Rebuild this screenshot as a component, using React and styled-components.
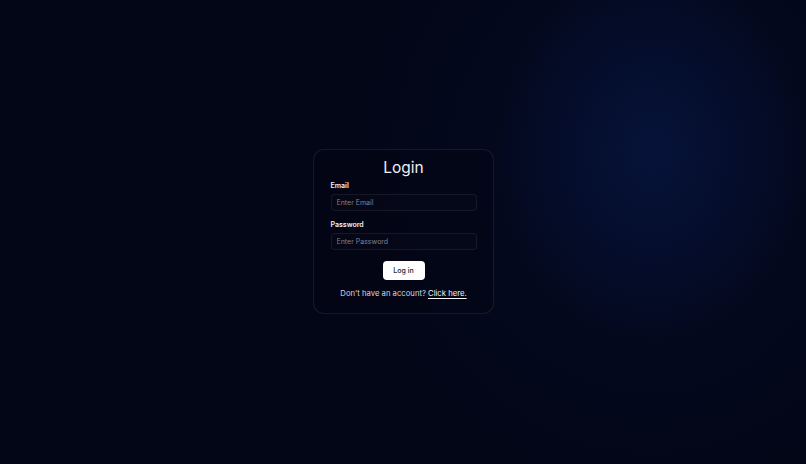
import React from 'react'
import styled, { createGlobalStyle } from 'styled-components'

const GlobalStyle = createGlobalStyle`
    html, body, #root {
        margin: 0;
        padding: 0;
        height: 100%;
    }
    body {
        font-family: Inter, "Noto Sans", sans-serif;
        background: #030617;
    }
`

const Page = styled.main`
    height: 100%;
    display: flex;
    align-items: center;
    justify-content: center;
    background:
        radial-gradient(ellipse 155px 195px at 652px 148px, rgba(6, 20, 62, 0.8), rgba(6, 20, 62, 0) 100%),
        radial-gradient(ellipse 300px 330px at 650px 170px, rgba(5, 14, 46, 0.6), rgba(5, 14, 46, 0) 100%),
        #030617;
`

const Card = styled.form`
    box-sizing: border-box;
    width: 181px;
    height: 165px;
    margin-top: -1px;
    padding: 9px 16px 0 17px;
    display: flex;
    flex-direction: column;
    border: 1px solid rgba(255, 255, 255, 0.08);
    border-radius: 11px;
    background: rgba(3, 5, 20, 0.55);
`

const Title = styled.h1`
    margin: 0 0 4px;
    font-size: 15.5px;
    font-weight: 400;
    line-height: 18px;
    text-align: center;
    color: #eef0f4;
`

const Field = styled.div`
    display: flex;
    flex-direction: column;
    gap: 3.5px;
    margin-bottom: ${props => (props.last ? '11px' : '9.5px')};
`

const Label = styled.label`
    display: block;
    height: 9px;
    font-size: 7px;
    font-weight: 600;
    line-height: 9px;
    color: #f1f2f5;
`

const Input = styled.input`
    box-sizing: border-box;
    display: block;
    width: 100%;
    height: 17px;
    margin: 0;
    padding: 0 5px;
    font-family: inherit;
    font-size: 7px;
    color: #e6e8ee;
    background: rgba(255, 255, 255, 0.012);
    border: 1px solid rgba(255, 255, 255, 0.07);
    border-radius: 4px;
    outline: none;

    &::placeholder {
        color: #7d8191;
    }
`

const Button = styled.button`
    align-self: center;
    width: 42px;
    height: 19px;
    margin: 0 0 9px;
    padding: 0;
    font-family: inherit;
    font-size: 7px;
    font-weight: 500;
    color: #1a1d29;
    background: #ffffff;
    border: none;
    border-radius: 4px;
    cursor: pointer;
`

const Footer = styled.p`
    margin: 0;
    text-align: center;
    font-size: 7.7px;
    line-height: 10px;
    color: #d6d9e0;
    white-space: nowrap;
`

const FooterLink = styled.a`
    color: #f4f5f8;
    text-decoration: underline;
    text-underline-offset: 1.5px;
`

export default function App() {
    return (
        <>
            <GlobalStyle />
            <Page>
                <Card onSubmit={ev => ev.preventDefault()}>
                    <Title>Login</Title>
                    <Field>
                        <Label htmlFor="email">Email</Label>
                        <Input id="email" type="email" placeholder="Enter Email" />
                    </Field>
                    <Field last>
                        <Label htmlFor="password">Password</Label>
                        <Input id="password" type="password" placeholder="Enter Password" />
                    </Field>
                    <Button type="submit">Log in</Button>
                    <Footer>
                        Don't have an account? <FooterLink href="#">Click here.</FooterLink>
                    </Footer>
                </Card>
            </Page>
        </>
    )
}
